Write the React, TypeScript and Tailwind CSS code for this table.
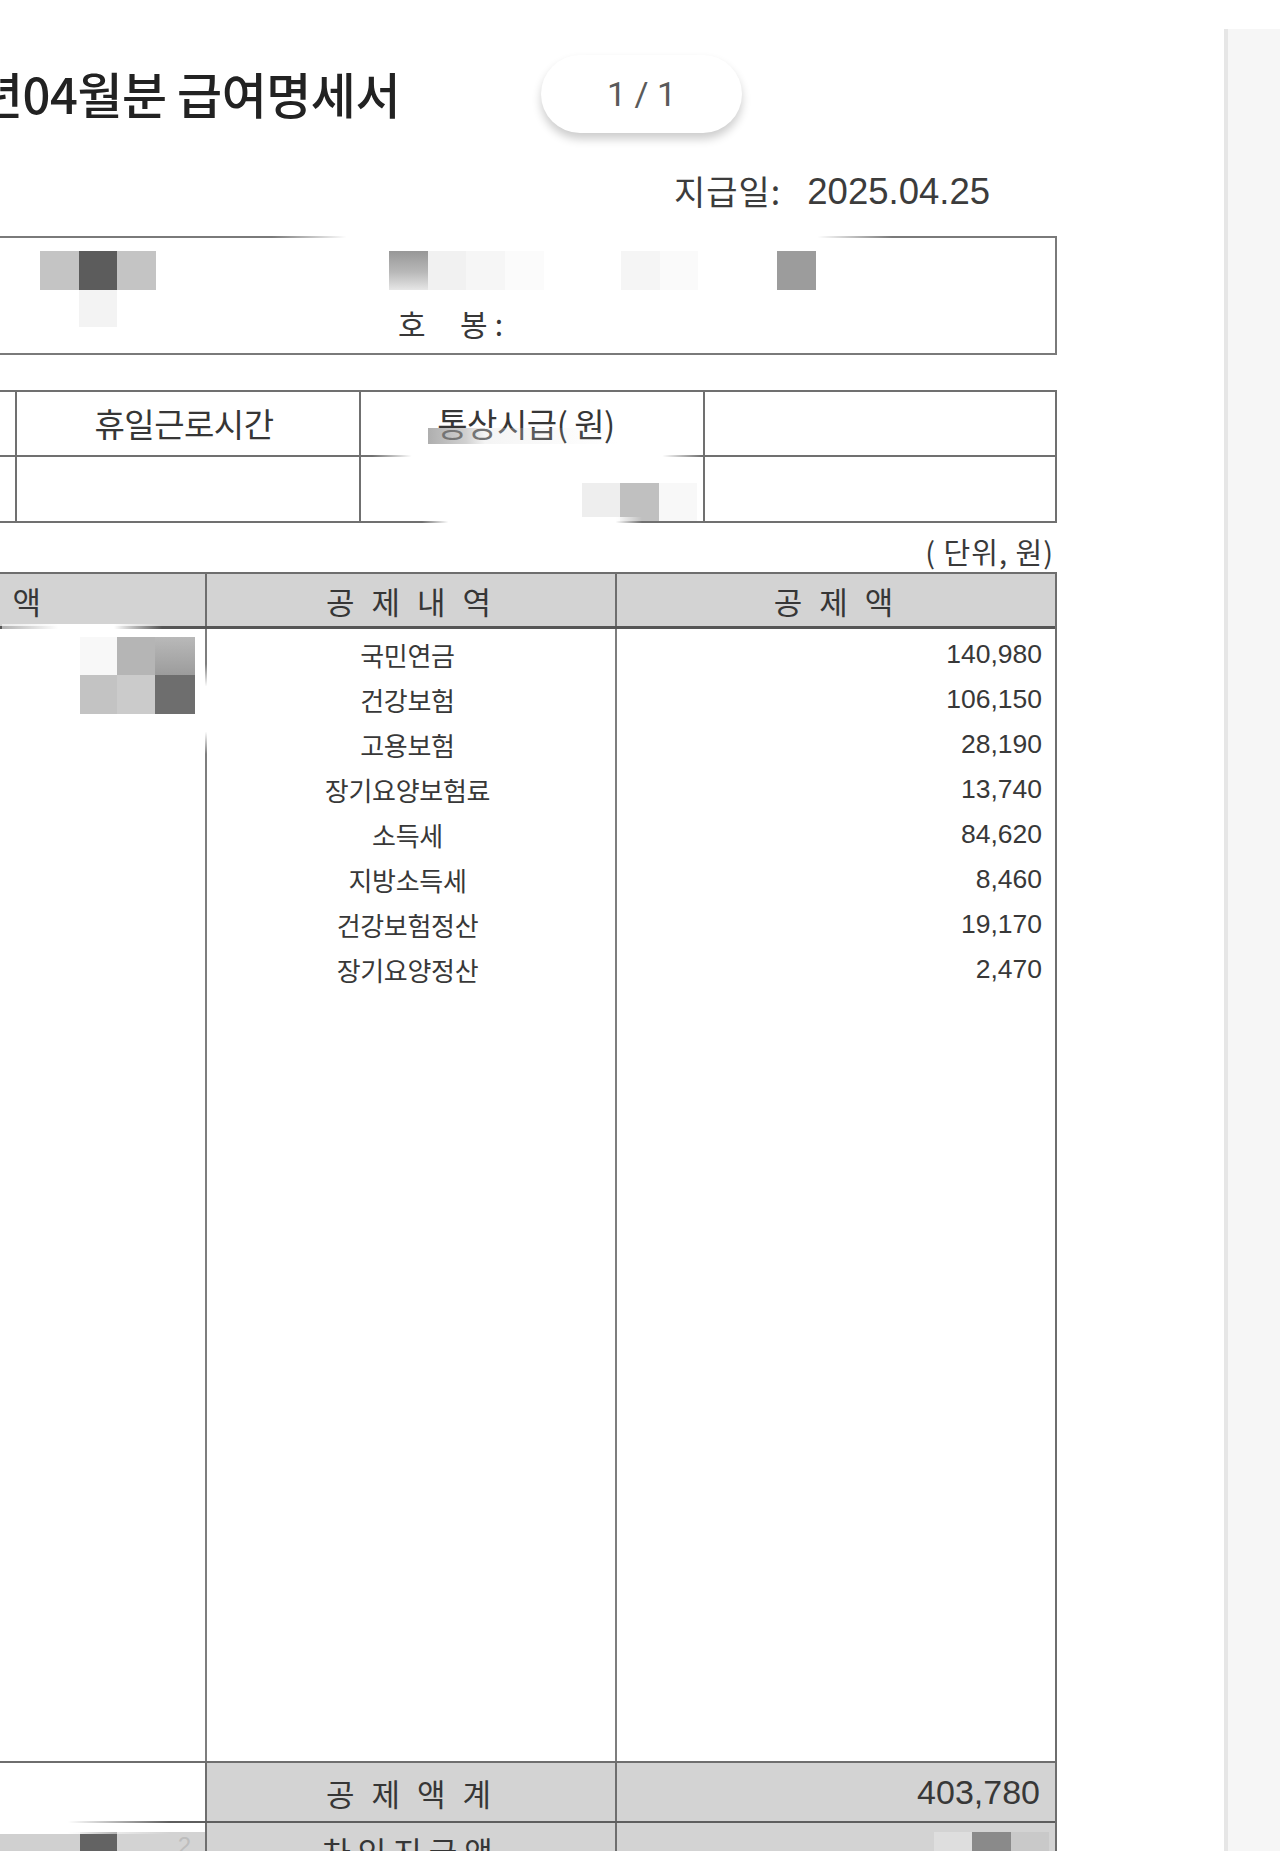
import React from "react";

const KR = "font-['Noto_Sans_CJK_KR','Noto_Sans',sans-serif]";
const NUM = "font-['Liberation_Sans','Noto_Sans_CJK_KR',sans-serif]";
const ROBOTO = "font-['Roboto','Noto_Sans_CJK_KR',sans-serif]";

type Cell = { w: number; c: string };

function Blocks({ items, h }: { items: Cell[]; h: number }) {
  return (
    <div className="flex shrink-0" style={{ height: h }}>
      {items.map((it, i) => (
        <div key={i} className="shrink-0" style={{ width: it.w, background: it.c }} />
      ))}
    </div>
  );
}

const deductions: [string, string][] = [
  ["국민연금", "140,980"],
  ["건강보험", "106,150"],
  ["고용보험", "28,190"],
  ["장기요양보험료", "13,740"],
  ["소득세", "84,620"],
  ["지방소득세", "8,460"],
  ["건강보험정산", "19,170"],
  ["장기요양정산", "2,470"],
];

const fadeH =
  "bg-[linear-gradient(to_right,rgba(255,255,255,0),#fff_12%,#fff_88%,rgba(255,255,255,0))]";

export default function App() {
  return (
    <div className={`w-[1280px] h-[1851px] bg-white flex overflow-hidden ${KR}`}>
      <main className="relative w-[1224px] h-[1851px] shrink-0 overflow-hidden bg-white">
        {/* Title + page pill */}
        <div className="flex items-start h-[160px]">
          <div className="w-[400px] shrink-0 flex justify-end mt-[68px]">
            <h1 className="whitespace-nowrap text-[49px] leading-none font-medium text-[#222] tracking-[-0.5px]">
              2025년04월분 급여명세서
            </h1>
          </div>
          <div className="ml-[141px] mt-[55px] w-[201px] h-[78px] shrink-0 rounded-full bg-white shadow-[0_6px_10px_rgba(0,0,0,0.2)] flex items-center justify-center">
            <span className={`text-[34px] leading-none text-[#5a5a5a] ${ROBOTO}`}>1 / 1</span>
          </div>
        </div>

        {/* Pay date */}
        <div className="h-[76px] w-[990px] flex justify-end items-start pt-[14px]">
          <span className="text-[34px] leading-none text-[#3c3c3c] tracking-[1px]">지급일:</span>
          <span className={`ml-[26px] text-[36.5px] leading-none text-[#3c3c3c] ${NUM}`}>2025.04.25</span>
        </div>

        {/* Info box */}
        <div className="relative ml-[-20px] w-[1077px] h-[119px] border-2 border-[#7a7a7a]">
          <div className="pt-[13px] pl-[58px]">
            <Blocks
              h={39}
              items={[
                { w: 39, c: "#c4c4c4" },
                { w: 38, c: "#5c5c5c" },
                { w: 39, c: "#c4c4c4" },
                { w: 233, c: "transparent" },
                { w: 39, c: "linear-gradient(to bottom,#979797,#b9b9b9 55%,#e6e6e6)" },
                { w: 38, c: "#f1f1f1" },
                { w: 39, c: "#f6f6f6" },
                { w: 39, c: "#fbfbfb" },
                { w: 77, c: "transparent" },
                { w: 39, c: "#f5f5f5" },
                { w: 38, c: "#fafafa" },
                { w: 79, c: "transparent" },
                { w: 39, c: "#9c9c9c" },
              ]}
            />
            <div className="flex items-start pl-[39px]">
              <div className="w-[38px] h-[37px] bg-[#f3f3f3] shrink-0" />
              <span className="ml-[281px] mt-[18px] whitespace-pre text-[30px] leading-none tracking-[7px] text-[#383838]">
                호  봉:
              </span>
            </div>
          </div>
          <div className={`absolute top-[-4px] left-[290px] w-[620px] h-[8px] ${fadeH}`} />
        </div>

        {/* Hours table */}
        <div className="relative mt-[35px] ml-[-20px] w-[1077px] border-2 border-[#707070] grid grid-cols-[35px_344px_344px_350px]">
          <div className="h-[65px] border-r-2 border-b-2 border-[#707070]" />
          <div className="h-[65px] border-r-2 border-b-2 border-[#707070] flex items-center justify-center pr-[8px]">
            <span className="text-[33px] leading-none text-[#363636] tracking-[-0.5px]">휴일근로시간</span>
          </div>
          <div className="h-[65px] border-r-2 border-b-2 border-[#707070] flex items-center justify-center pr-[12px]">
            <span className="text-[33px] leading-none text-[#363636] tracking-[-0.5px]">통상시급( 원)</span>
          </div>
          <div className="h-[65px] border-b-2 border-[#707070]" />
          <div className="h-[64px] border-r-2 border-[#707070]" />
          <div className="h-[64px] border-r-2 border-[#707070]" />
          <div className="h-[64px] border-r-2 border-[#707070] flex justify-end items-end pr-[6px]">
            <Blocks
              h={38}
              items={[
                { w: 38, c: "#eeeeee" },
                { w: 39, c: "#c0c0c0" },
                { w: 38, c: "#f8f8f8" },
              ]}
            />
          </div>
          <div className="h-[64px]" />
          <div className="absolute top-[36px] left-[446px] w-[190px] h-[16px] bg-[linear-gradient(to_right,rgba(140,140,140,0.7),rgba(170,170,170,0.55)_20%,rgba(225,225,225,0.35)_30%,rgba(240,240,240,0))]" />
          <div className={`absolute top-[60px] left-[390px] w-[330px] h-[8px] ${fadeH}`} />
          <div className={`absolute top-[125px] left-[440px] w-[220px] h-[8px] ${fadeH}`} />
        </div>

        {/* Unit */}
        <div className="h-[49px] w-[1054px] flex justify-end items-start pt-[14px]">
          <span className="text-[29px] leading-none text-[#3a3a3a] whitespace-pre tracking-[1px]">( 단위, 원)</span>
        </div>

        {/* Main table */}
        <div className="relative ml-[-40px] w-[1097px] border-2 border-b-0 border-[#6e6e6e]">
          <div className="grid grid-cols-[245px_410px_438px] h-[55px] bg-[#d3d3d3] border-b-[3px] border-[#555]">
            <div className="border-r-2 border-[#6e6e6e] flex items-center justify-end pr-[159px]">
              <span className="text-[31px] leading-none text-[#363636] whitespace-pre tracking-[5px]">지 급 액</span>
            </div>
            <div className="border-r-2 border-[#6e6e6e] flex items-center justify-center">
              <span className="text-[31px] leading-none text-[#363636] tracking-[5px]">공 제 내 역</span>
            </div>
            <div className="flex items-center justify-center">
              <span className="text-[31px] leading-none text-[#363636] tracking-[5px]">공 제 액</span>
            </div>
          </div>

          {/* body */}
          <div className="grid grid-cols-[245px_410px_438px] h-[1134px] border-b-2 border-[#6e6e6e]">
            <div className="border-r-2 border-[#7e7e7e] pt-[8px] pl-[118px]">
              <Blocks
                h={38}
                items={[
                  { w: 37, c: "#f8f8f8" },
                  { w: 38, c: "#b5b5b5" },
                  { w: 40, c: "linear-gradient(to bottom,#b9b9b9,#9c9c9c)" },
                ]}
              />
              <Blocks
                h={39}
                items={[
                  { w: 37, c: "#c3c3c3" },
                  { w: 38, c: "#cbcbcb" },
                  { w: 40, c: "#6e6e6e" },
                ]}
              />
            </div>
            <div className="border-r-2 border-[#7e7e7e] pt-[3px] pr-[7px] flex flex-col">
              {deductions.map(([name]) => (
                <div key={name} className="h-[45px] flex items-center justify-center">
                  <span className="text-[26px] leading-none text-[#383838] tracking-[-0.3px]">{name}</span>
                </div>
              ))}
            </div>
            <div className="pt-[3px] pr-[13px] flex flex-col">
              {deductions.map(([name, amt]) => (
                <div key={name} className="h-[45px] flex items-center justify-end">
                  <span className={`text-[26.5px] leading-none text-[#383838] ${NUM}`}>{amt}</span>
                </div>
              ))}
            </div>
          </div>

          {/* total */}
          <div className="grid grid-cols-[245px_410px_438px] h-[60px] border-b-2 border-[#5e5e5e]">
            <div className="border-r-2 border-[#6e6e6e] bg-white" />
            <div className="border-r-2 border-[#6e6e6e] bg-[#d3d3d3] flex items-center justify-center">
              <span className="text-[31px] leading-none text-[#363636] tracking-[5px]">공 제 액 계</span>
            </div>
            <div className="bg-[#d3d3d3] flex items-center justify-end pr-[15px]">
              <span className={`text-[34px] leading-none text-[#383838] ${NUM}`}>403,780</span>
            </div>
          </div>

          {/* net pay row */}
          <div className="grid grid-cols-[245px_410px_438px] h-[60px]">
            <div className="border-r-2 border-[#6e6e6e] pt-[9px]">
              <div className="h-full bg-[#d3d3d3] flex">
                <div className="w-[118px] shrink-0 bg-[#d0d0d0]" />
                <div className="w-[37px] shrink-0 bg-[#636363]" />
                <div className="flex-1 flex justify-end pr-[14px] pt-[2px]">
                  <span className={`text-[24px] leading-none text-[#bdbdbd] ${NUM}`}>2</span>
                </div>
              </div>
            </div>
            <div className="border-r-2 border-[#6e6e6e] bg-[#d3d3d3] flex justify-center pt-[12px]">
              <span className="text-[31px] leading-none text-[#363636] tracking-[7px]">차인지급액</span>
            </div>
            <div className="bg-[#d3d3d3] flex justify-end pt-[9px] pr-[6px]">
              <Blocks
                h={50}
                items={[
                  { w: 38, c: "#dedede" },
                  { w: 39, c: "#8a8a8a" },
                  { w: 38, c: "#c9c9c9" },
                ]}
              />
            </div>
          </div>

          {/* privacy blur smears */}
          <div className="absolute top-[50px] left-[40px] w-[160px] h-[8px] bg-[linear-gradient(to_right,rgba(255,255,255,0.55),#fff_35%,#fff_70%,rgba(255,255,255,0))]" />
          <div className="absolute top-[90px] left-[238px] w-[16px] h-[90px] bg-[linear-gradient(to_bottom,rgba(255,255,255,0),#fff_25%,#fff_75%,rgba(255,255,255,0))]" />
          <div className="absolute top-[1246px] left-[38px] w-[170px] h-[14px] bg-[linear-gradient(to_right,#fff,#fff_40%,rgba(255,255,255,0))]" />
        </div>
      </main>

      <aside className="mt-[29px] w-[56px] h-[1822px] shrink-0 bg-[#f6f6f6] border-l-4 border-[#e6e6e6]" />
    </div>
  );
}
